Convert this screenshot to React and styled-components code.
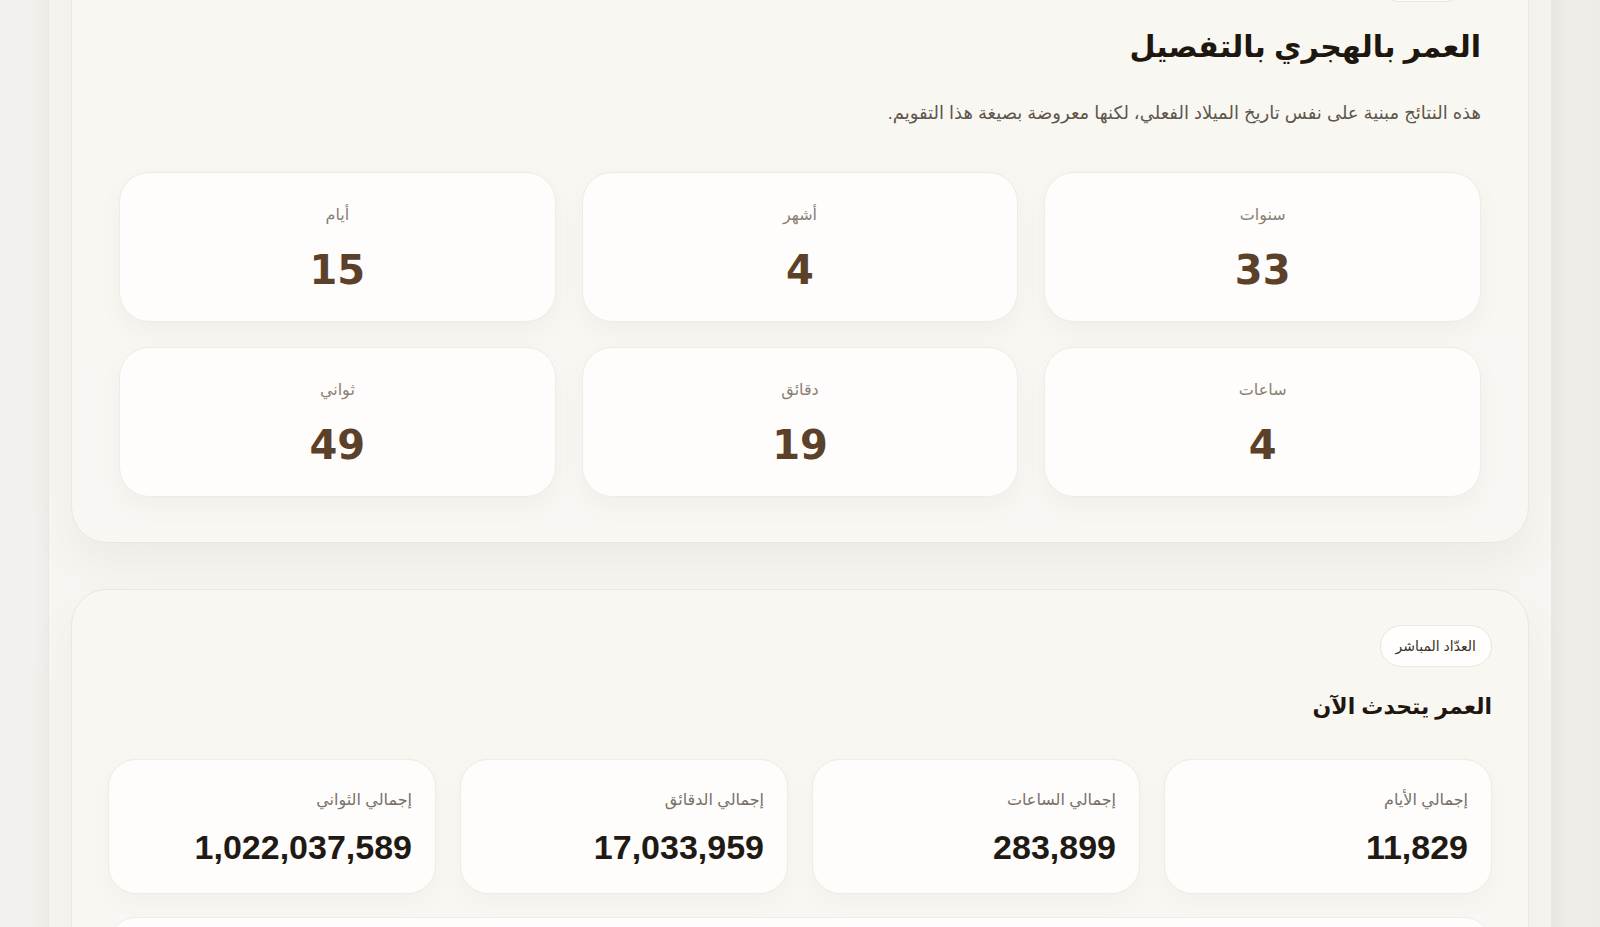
import React from "react";
import styled, { createGlobalStyle } from "styled-components";

const hijri = [
  { label: "سنوات", value: "33" },
  { label: "أشهر", value: "4" },
  { label: "أيام", value: "15" },
  { label: "ساعات", value: "4" },
  { label: "دقائق", value: "19" },
  { label: "ثواني", value: "49" },
];

const totals = [
  { label: "إجمالي الأيام", value: "11,829" },
  { label: "إجمالي الساعات", value: "283,899" },
  { label: "إجمالي الدقائق", value: "17,033,959" },
  { label: "إجمالي الثواني", value: "1,022,037,589" },
];

const App = () => {
  return (
    <Page dir="rtl">
      <GlobalStyle />
      <Shell>
        <Section>
          <Pill $offset="15px" aria-hidden="true" />
          <Title>العمر بالهجري بالتفصيل</Title>
          <Lead>
            هذه النتائج مبنية على نفس تاريخ الميلاد الفعلي، لكنها معروضة بصيغة
            هذا التقويم.
          </Lead>
          <HijriGrid>
            {hijri.map((item) => (
              <HijriCard key={item.label}>
                <HijriLabel>{item.label}</HijriLabel>
                <HijriValue>{item.value}</HijriValue>
              </HijriCard>
            ))}
          </HijriGrid>
        </Section>

        <Section $compact>
          <Pill>العدّاد المباشر</Pill>
          <SubTitle>العمر يتحدث الآن</SubTitle>
          <TotalsGrid>
            {totals.map((item) => (
              <TotalCard key={item.label}>
                <TotalLabel>{item.label}</TotalLabel>
                <TotalValue>{item.value}</TotalValue>
              </TotalCard>
            ))}
          </TotalsGrid>
          <WideCard />
        </Section>
      </Shell>
    </Page>
  );
};

export default App;

const GlobalStyle = createGlobalStyle`
  html, body {
    margin: 0;
    padding: 0;
    background: #f1efeb;
    overflow: hidden;
  }
  body {
    font-family: "Liberation Sans", Arial, "DejaVu Sans", sans-serif;
  }
  * {
    box-sizing: border-box;
  }
`;

const Page = styled.div`
  height: 927px;
  overflow: hidden;
  padding: 0 48px;
  background: linear-gradient(90deg, #f3f1ee 0%, #efece8 100%);
`;

// scrolled view: the top of the first section sits above the window
const Shell = styled.div`
  margin-top: -88px;
  background: #f8f6f2;
  border-left: 1px solid #ebe8e3;
  border-right: 1px solid #ebe8e3;
  box-shadow: 0 0 18px rgba(110, 95, 75, 0.06);
  padding: 0 22px 40px;
  display: flex;
  flex-direction: column;
  gap: 46px;
  min-height: 1200px;
`;

const Section = styled.section`
  background: linear-gradient(180deg, #f9f7f2 0%, #f8f7f3 100%);
  border: 1px solid #ebe7df;
  border-radius: 36px;
  padding: ${(p) => (p.$compact ? "35px 36px 36px" : "47px 47px 45px")};
  box-shadow: 0 22px 44px rgba(120, 100, 70, 0.07);
  display: flex;
  flex-direction: column;
  align-items: flex-start;
`;

const Pill = styled.span`
  height: 42px;
  min-width: 88px;
  display: inline-flex;
  align-items: center;
  padding: 0 15px;
  margin-inline-start: ${(p) => p.$offset || "0"};
  border-radius: 999px;
  background: #fffefc;
  border: 1px solid #ebe6de;
  font-size: 14px;
  color: #3a3028;
`;

const Title = styled.h2`
  margin: 24px 0 0;
  font-size: 30px;
  line-height: 42px;
  font-weight: 700;
  color: #1d1710;
`;

const Lead = styled.p`
  margin: 31px 0 0;
  font-size: 18px;
  line-height: 29px;
  color: #5f554b;
`;

const HijriGrid = styled.div`
  align-self: stretch;
  margin-top: 44px;
  display: grid;
  grid-template-columns: repeat(3, 1fr);
  gap: 25px 26px;
`;

const HijriCard = styled.div`
  background: #fefdfb;
  border: 1px solid #efebe5;
  border-radius: 30px;
  padding: 31px 20px 27px;
  display: flex;
  flex-direction: column;
  align-items: center;
  gap: 20px;
  box-shadow: 0 10px 24px rgba(120, 100, 70, 0.05);
`;

const HijriLabel = styled.span`
  font-size: 16px;
  line-height: 22px;
  color: #8a7f74;
`;

const HijriValue = styled.span`
  font-family: "DejaVu Sans", sans-serif;
  font-weight: 700;
  font-size: 40px;
  line-height: 48px;
  color: #5b4129;
`;

const SubTitle = styled.h3`
  margin: 24px 0 0;
  font-size: 22px;
  line-height: 31px;
  font-weight: 700;
  color: #1d1710;
`;

const TotalsGrid = styled.div`
  align-self: stretch;
  margin-top: 37px;
  display: grid;
  grid-template-columns: repeat(4, 1fr);
  gap: 24px;
`;

const TotalCard = styled.div`
  background: #fefdfb;
  border: 1px solid #efebe5;
  border-radius: 28px;
  padding: 29px 23px 25px;
  display: flex;
  flex-direction: column;
  align-items: flex-start;
  gap: 16px;
  box-shadow: 0 10px 24px rgba(120, 100, 70, 0.04);
`;

const TotalLabel = styled.span`
  font-size: 16px;
  line-height: 22px;
  color: #7a7068;
`;

const TotalValue = styled.span`
  font-weight: 700;
  font-size: 34px;
  line-height: 41px;
  color: #1f1a14;
`;

const WideCard = styled.div`
  align-self: stretch;
  margin-top: 23px;
  height: 140px;
  background: #fefdfb;
  border: 1px solid #efebe5;
  border-radius: 28px;
`;
